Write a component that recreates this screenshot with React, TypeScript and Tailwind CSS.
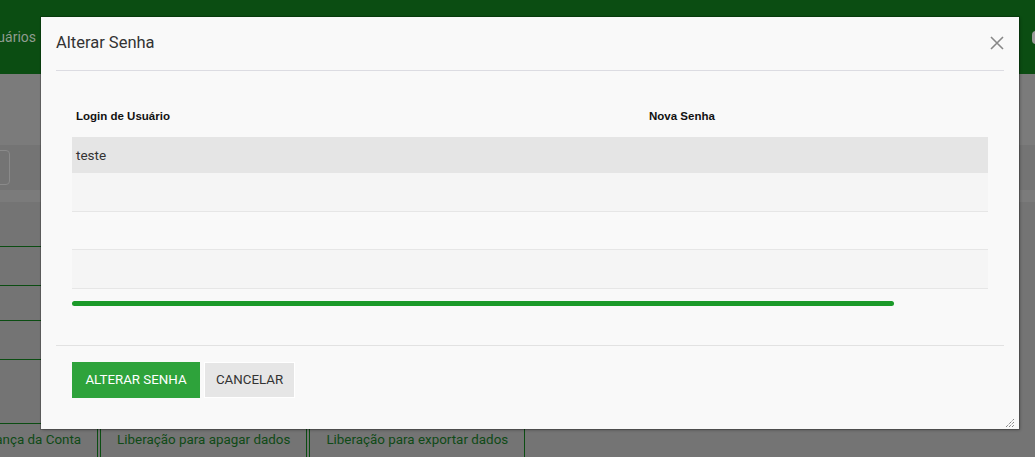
import React from 'react';

const menuRows = [45, 39, 35, 39];

export default function App() {
  return (
    <div className="relative h-[457px] w-[1035px] overflow-hidden bg-[#747474] font-['Roboto',sans-serif]">
      {/* Page behind the dialog (dimmed) */}
      <header className="flex h-[74px] items-center bg-[#0b4d12]">
        <span className="-ml-[19px] text-[14px] text-[#8f9c90]">Usuários</span>
        <div className="ml-auto -mr-[5px] h-[13px] w-[8px] rounded-sm bg-[#9a9a9a]" />
      </header>
      <div className="h-[71px] bg-[#7b7b7b]" />
      <div className="flex h-[45px] items-center">
        <div className="-ml-[20px] h-[35px] w-[30px] rounded-sm border border-[#8a8a8a]" />
      </div>
      <div className="h-[12px] bg-[#7b7b7b]" />
      <div className="flex w-[200px] flex-col">
        {menuRows.map((h, i) => (
          <div key={i} className="border-b border-[#0b4d12]" style={{ height: h }} />
        ))}
      </div>
      <div className="absolute bottom-0 left-0 flex h-[34px] items-stretch text-[13.4px] text-[#0f4a16]">
        <div className="-ml-[56px] flex items-center border border-b-0 border-[#0b4d12] pl-[16px] pr-[16px]">
          Segurança da Conta
        </div>
        <div className="ml-[2px] flex items-center border border-b-0 border-[#0b4d12] px-[16px]">
          Liberação para apagar dados
        </div>
        <div className="ml-[2px] flex items-center border border-b-0 border-[#0b4d12] px-[16px]">
          Liberação para exportar dados
        </div>
      </div>

      {/* Dialog */}
      <div className="absolute left-[41px] top-[17px] flex h-[412px] w-[978px] flex-col bg-[#f9f9f9] shadow-[0_0_0_1px_rgba(0,0,0,0.18),1px_1px_3px_rgba(0,0,0,0.3)]">
        <div className="px-[15px]">
          <div className="flex h-[54px] items-center justify-between border-b border-[#dcdce2] pb-[1px]">
            <h2 className="text-[16.5px] text-[#333]">Alterar Senha</h2>
            <button aria-label="Fechar" className="flex h-[14px] w-[14px] items-center justify-center text-[#888]">
              <svg width="14" height="14" viewBox="0 0 14 14" fill="none" stroke="currentColor" strokeWidth="1.6">
                <path d="M1 1l12 12M13 1L1 13" />
              </svg>
            </button>
          </div>
        </div>

        <div className="px-[31px] pt-[25px]">
          <div className="flex h-[41px] items-center font-['Liberation_Sans',sans-serif] text-[11.5px] font-bold text-[#111]">
            <div className="w-[577px] pl-[4px]">Login de Usuário</div>
            <div>Nova Senha</div>
          </div>
          <div className="flex h-[36px] items-center bg-[#e5e5e5] pl-[4px] text-[13.5px] text-[#333]">teste</div>
          <div className="h-[39px] border-b border-[#e6e6e6] bg-[#f5f5f5]" />
          <div className="h-[38px] border-b border-[#e6e6e6]" />
          <div className="h-[39px] border-b border-[#e6e6e6] bg-[#f5f5f5]" />
          <div className="mt-[12px] h-[5px] w-[822px] rounded-full bg-[#1b9a29]" />
        </div>

        <div className="mt-[39px] px-[15px]">
          <div className="border-b border-[#e2e2e2]" />
        </div>

        <div className="flex px-[31px] pt-[16px]">
          <button className="flex h-[36px] w-[128px] items-center justify-center bg-[#2ea33b] text-[13.3px] text-white">
            ALTERAR SENHA
          </button>
          <button className="ml-[4px] flex h-[36px] w-[91px] items-center justify-center border border-white bg-[#e6e6e6] text-[13.3px] text-[#333]">
            CANCELAR
          </button>
        </div>

        {/* resize grip */}
        <svg className="absolute bottom-[2px] right-[5px]" width="10" height="10" viewBox="0 0 10 10" stroke="#555" strokeWidth="1" strokeDasharray="1 1">
          <path d="M2 10L10 2M5 10L10 5M8 10L10 8" />
        </svg>
      </div>
    </div>
  );
}
